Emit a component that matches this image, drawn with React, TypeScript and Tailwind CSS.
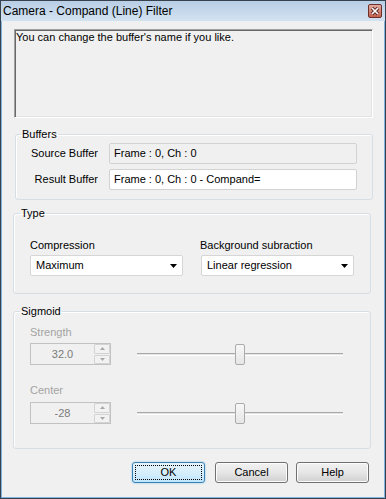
import React from 'react';

const font = { fontFamily: '"Liberation Sans", Arial, sans-serif' };

const Legend = ({ text, offset }: { text: string; offset: string }) => (
  <legend className={`${offset} px-[1px] text-[11px] leading-[13px] text-black`}>{text}</legend>
);

const Field = ({ value, disabled }: { value: string; disabled?: boolean }) => (
  <div
    className={`w-[248px] h-[21px] border border-[#d2d2d2] rounded-[2px] flex items-center pl-[4px] text-[11px] text-black ${
      disabled ? 'bg-[#f0f0f0]' : 'bg-white'
    }`}
  >
    {value}
  </div>
);

const Dropdown = ({ value }: { value: string }) => (
  <div className="w-[153px] h-[21px] bg-white border border-[#d6d6d6] rounded-[2px] flex items-center justify-between pl-[5px] pr-[5px] text-[11px] text-black">
    <span>{value}</span>
    <svg width="7" height="4" viewBox="0 0 7 4">
      <polygon points="0,0 7,0 3.5,4" fill="#000" />
    </svg>
  </div>
);

const SpinBox = ({ value }: { value: string }) => (
  <div className="w-[81px] h-[22px] bg-[#f0f0f0] border border-[#c2c2c2] flex items-stretch">
    <div className="flex-1 flex items-center justify-center text-[11px] text-[#7a7a7a]">{value}</div>
    <div className="w-[16px] flex flex-col gap-[1px] py-[0px]">
      <div className="flex-1 border border-[#d3d3d3] rounded-[1px] bg-[#f2f2f2] flex items-center justify-center">
        <svg width="5" height="3" viewBox="0 0 5 3">
          <polygon points="0,3 5,3 2.5,0" fill="#a8a8a8" />
        </svg>
      </div>
      <div className="flex-1 border border-[#d3d3d3] rounded-[1px] bg-[#f2f2f2] flex items-center justify-center">
        <svg width="5" height="3" viewBox="0 0 5 3">
          <polygon points="0,0 5,0 2.5,3" fill="#a8a8a8" />
        </svg>
      </div>
    </div>
  </div>
);

const Slider = () => (
  <div className="relative w-[206px] h-[21px] flex items-center">
    <div className="w-full h-[3px] border-t border-[#a9a9a9] border-b border-b-white bg-[#e3e3e3]" />
    <div className="absolute left-[98px] top-0 w-[10px] h-[21px] rounded-[2px] border border-[#ababab] bg-gradient-to-b from-[#f7f7f7] to-[#e6e6e6]" />
  </div>
);

const Button = ({ label, focused, className = '' }: { label: string; focused?: boolean; className?: string }) =>
  focused ? (
    <div
      className={`w-[73px] h-[21px] rounded-[3px] border border-[#3c7fb1] p-[2px] bg-gradient-to-b from-[#e5f4fc] via-[#d7eefb] to-[#bee6fd] shadow-[0_0_2px_#6fc7ef] ${className}`}
    >
      <div className="w-full h-full border border-dotted border-[#000] flex items-center justify-center text-[11px] text-black">
        {label}
      </div>
    </div>
  ) : (
    <div
      className={`w-[73px] h-[21px] rounded-[3px] border border-[#707070] flex items-center justify-center text-[11px] text-black bg-gradient-to-b from-[#f2f2f2] via-[#e6e6e6] to-[#d0d0d0] shadow-[inset_0_0_0_1px_#fcfcfc] ${className}`}
    >
      {label}
    </div>
  );

export default function App() {
  return (
    <div className="w-[386px] h-[499px] border border-[#38424e] flex flex-col" style={font}>
      {/* Title bar */}
      <div className="h-[20px] flex items-center justify-between pl-[2px] bg-gradient-to-b from-[#b8cee6] to-[#d3e2f1]">
        <span className="text-[12px] leading-[14px] text-black">Camera - Compand (Line) Filter</span>
        <div className="mr-[3px] w-[14px] h-[14px] rounded-[2px] border border-[#6e2f2a] bg-gradient-to-b from-[#e2aa9e] to-[#c3604f] flex items-center justify-center">
          <svg width="10" height="10" viewBox="0 0 10 10">
            <path d="M2 2 L8 8 M8 2 L2 8" stroke="#5b2420" strokeWidth="3.2" />
            <path d="M2 2 L8 8 M8 2 L2 8" stroke="#fff" strokeWidth="1.6" />
          </svg>
        </div>
      </div>

      {/* Body */}
      <div className="flex-1 flex flex-col bg-[#f0f0f0] border-x border-b border-[#7fb2dc]">
        {/* Description */}
        <div className="mt-[8px] ml-[12px] w-[359px] h-[89px] border border-[#a0a0a0] border-r-white border-b-white shadow-[inset_1px_1px_0_#696969,inset_-1px_-1px_0_#e3e3e3] pl-[1px] pt-[1px]">
          <p className="text-[11px] leading-[13px] text-black">You can change the buffer's name if you like.</p>
        </div>

        {/* Buffers */}
        <fieldset className="mt-[10px] ml-[13px] w-[358px] border border-[#d5dfe5] rounded-[3px] shadow-[inset_1px_1px_0_#fff] pt-[2px] pb-[9px]">
          <Legend text="Buffers" offset="ml-[5px]" />
          <div className="flex flex-col gap-[5px]">
            <div className="flex items-center gap-[11px]">
              <span className="w-[82px] text-right text-[11px] text-black">Source Buffer</span>
              <Field value="Frame : 0, Ch : 0" disabled />
            </div>
            <div className="flex items-center gap-[11px]">
              <span className="w-[82px] text-right text-[11px] text-black">Result Buffer</span>
              <Field value="Frame : 0, Ch : 0 - Compand=" />
            </div>
          </div>
        </fieldset>

        {/* Type */}
        <fieldset className="mt-[7px] ml-[11px] w-[358px] border border-[#d5dfe5] rounded-[3px] shadow-[inset_1px_1px_0_#fff] pt-[19px] pb-[17px] pl-[16px]">
          <Legend text="Type" offset="ml-[-10px]" />
          <div className="flex gap-[18px]">
            <div className="flex flex-col gap-[3px]">
              <span className="text-[11px] leading-[13px] text-black">Compression</span>
              <Dropdown value="Maximum" />
            </div>
            <div className="flex flex-col gap-[3px]">
              <span className="text-[11px] leading-[13px] text-black -ml-[1px]">Background subraction</span>
              <Dropdown value="Linear regression" />
            </div>
          </div>
        </fieldset>

        {/* Sigmoid */}
        <fieldset className="mt-[11px] ml-[11px] w-[358px] border border-[#d5dfe5] rounded-[3px] shadow-[inset_1px_1px_0_#fff] pt-[8px] pb-[24px] pl-[16px]">
          <Legend text="Sigmoid" offset="ml-[-10px]" />
          <span className="block text-[11px] leading-[13px] text-[#a3a3a3]">Strength</span>
          <div className="mt-[4px] flex items-center gap-[26px]">
            <SpinBox value="32.0" />
            <Slider />
          </div>
          <span className="block mt-[19px] text-[11px] leading-[13px] text-[#a3a3a3]">Center</span>
          <div className="mt-[5px] flex items-center gap-[26px]">
            <SpinBox value="-28" />
            <Slider />
          </div>
        </fieldset>

        {/* Buttons */}
        <div className="mt-[13px] flex justify-end pr-[15px]">
          <Button label="OK" focused className="mr-[10px]" />
          <Button label="Cancel" className="mr-[8px]" />
          <Button label="Help" />
        </div>
      </div>
    </div>
  );
}
